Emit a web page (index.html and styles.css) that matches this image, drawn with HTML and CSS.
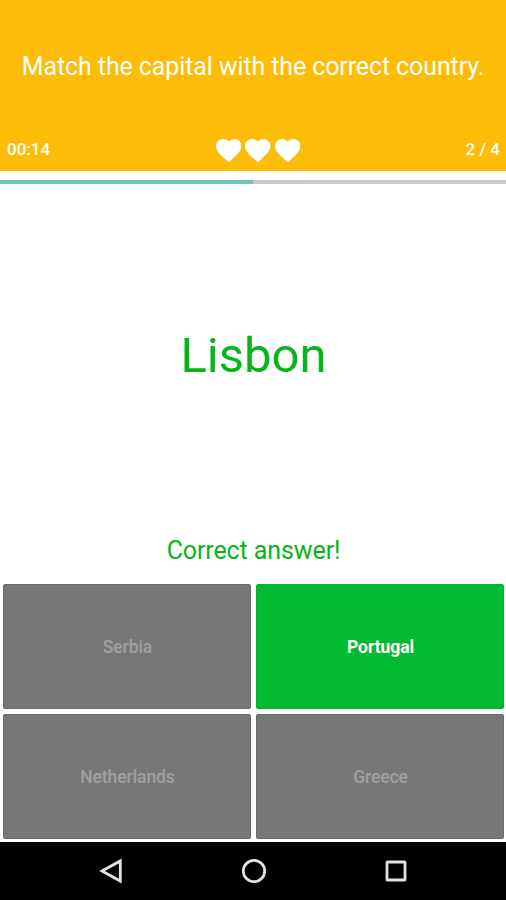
FILE: index.html
```html
<!DOCTYPE html>
<html lang="en">
<head>
    <meta charset="UTF-8">
    <meta name="viewport" content="width=device-width, initial-scale=1.0">
    <title>Capitals Quiz</title>
    <link rel="stylesheet" href="styles.css">
</head>
<body>
    <div class="header">
        <h1 class="title">Match the capital with the correct country.</h1>
        <div class="status">
            <span class="timer">00:14</span>
            <div class="lives">
                <svg class="heart" viewBox="2 3 20 18.35"><path d="M12 21.35l-1.45-1.32C5.4 15.36 2 12.28 2 8.5 2 5.42 4.42 3 7.5 3c1.74 0 3.41.81 4.5 2.09C13.09 3.81 14.76 3 16.5 3 19.58 3 22 5.42 22 8.5c0 3.78-3.4 6.86-8.55 11.54L12 21.35z"/></svg>
                <svg class="heart" viewBox="2 3 20 18.35"><path d="M12 21.35l-1.45-1.32C5.4 15.36 2 12.28 2 8.5 2 5.42 4.42 3 7.5 3c1.74 0 3.41.81 4.5 2.09C13.09 3.81 14.76 3 16.5 3 19.58 3 22 5.42 22 8.5c0 3.78-3.4 6.86-8.55 11.54L12 21.35z"/></svg>
                <svg class="heart" viewBox="2 3 20 18.35"><path d="M12 21.35l-1.45-1.32C5.4 15.36 2 12.28 2 8.5 2 5.42 4.42 3 7.5 3c1.74 0 3.41.81 4.5 2.09C13.09 3.81 14.76 3 16.5 3 19.58 3 22 5.42 22 8.5c0 3.78-3.4 6.86-8.55 11.54L12 21.35z"/></svg>
            </div>
            <span class="count">2 / 4</span>
        </div>
    </div>

    <div class="progress">
        <div class="progress-bar" style="width: 50%"></div>
    </div>

    <div class="question">Lisbon</div>
    <p class="result">Correct answer!</p>

    <div class="answers">
        <button class="answer" disabled>Serbia</button>
        <button class="answer correct">Portugal</button>
        <button class="answer" disabled>Netherlands</button>
        <button class="answer" disabled>Greece</button>
    </div>

    <div class="navbar">
        <svg class="nav-icon" viewBox="0 0 28 28"><path d="M4 14L22.3 3.9V24.1Z"/></svg>
        <svg class="nav-icon" viewBox="0 0 28 28"><circle cx="14" cy="14" r="10.7"/></svg>
        <svg class="nav-icon" viewBox="0 0 28 28"><rect x="5" y="5" width="18" height="18" rx="0.5"/></svg>
    </div>
</body>
</html>
```
FILE: styles.css
```css
* {
    box-sizing: border-box;
}

body {
    font-family: Roboto, "Liberation Sans", sans-serif;
    background-color: #fff;
    margin: 0;
    height: 900px;
    display: flex;
    flex-direction: column;
    overflow: hidden;
}

.header {
    background-color: #fcbc07;
    color: #fff;
    height: 171px;
    display: flex;
    flex-direction: column;
}

.title {
    margin: 0;
    padding-top: 5px;
    height: 127px;
    line-height: 124px;
    font-size: 25px;
    font-weight: 400;
    letter-spacing: -0.11px;
    text-align: center;
    white-space: nowrap;
}

.status {
    display: flex;
    justify-content: space-between;
    align-items: center;
    height: 43px;
    padding: 0 6px 0 7px;
    font-size: 17px;
    font-weight: 500;
}

.lives {
    display: flex;
    gap: 4px;
    padding-top: 4px;
}

.heart {
    width: 25.5px;
    height: 23.4px;
    fill: #fff;
}

.progress {
    height: 4px;
    margin-top: 9px;
    background-color: #c9c9c9;
}

.progress-bar {
    height: 100%;
    background-color: #75c5ba;
}

.question {
    height: 342px;
    padding-left: 1px;
    line-height: 344px;
    font-size: 49px;
    color: #07b51b;
    text-align: center;
}

.result {
    margin: 0;
    height: 58px;
    padding-left: 1px;
    line-height: 49px;
    font-size: 25px;
    letter-spacing: -0.1px;
    color: #07b51b;
    text-align: center;
}

.answers {
    display: grid;
    grid-template-columns: 1fr 1fr;
    grid-template-rows: 125px 125px;
    gap: 5px;
    height: 258px;
    padding: 0 2px 0 3px;
}

.answer {
    font-family: inherit;
    font-size: 17.5px;
    font-weight: 500;
    letter-spacing: -0.08px;
    color: #a0a0a0;
    background-color: #777;
    border: 1px solid #6a6a6a;
    border-radius: 2px;
    padding: 0 0 0 1px;
}

.answer.correct {
    font-weight: 700;
    color: #fff;
    background-color: #02bb33;
    border-color: #04b22c;
}

.navbar {
    display: flex;
    justify-content: center;
    align-items: center;
    gap: 114px;
    flex: 1;
    padding-left: 1px;
    background-color: #000;
}

.nav-icon {
    width: 28px;
    height: 28px;
    fill: none;
    stroke: #e2e2e2;
    stroke-width: 2.8;
}
```
